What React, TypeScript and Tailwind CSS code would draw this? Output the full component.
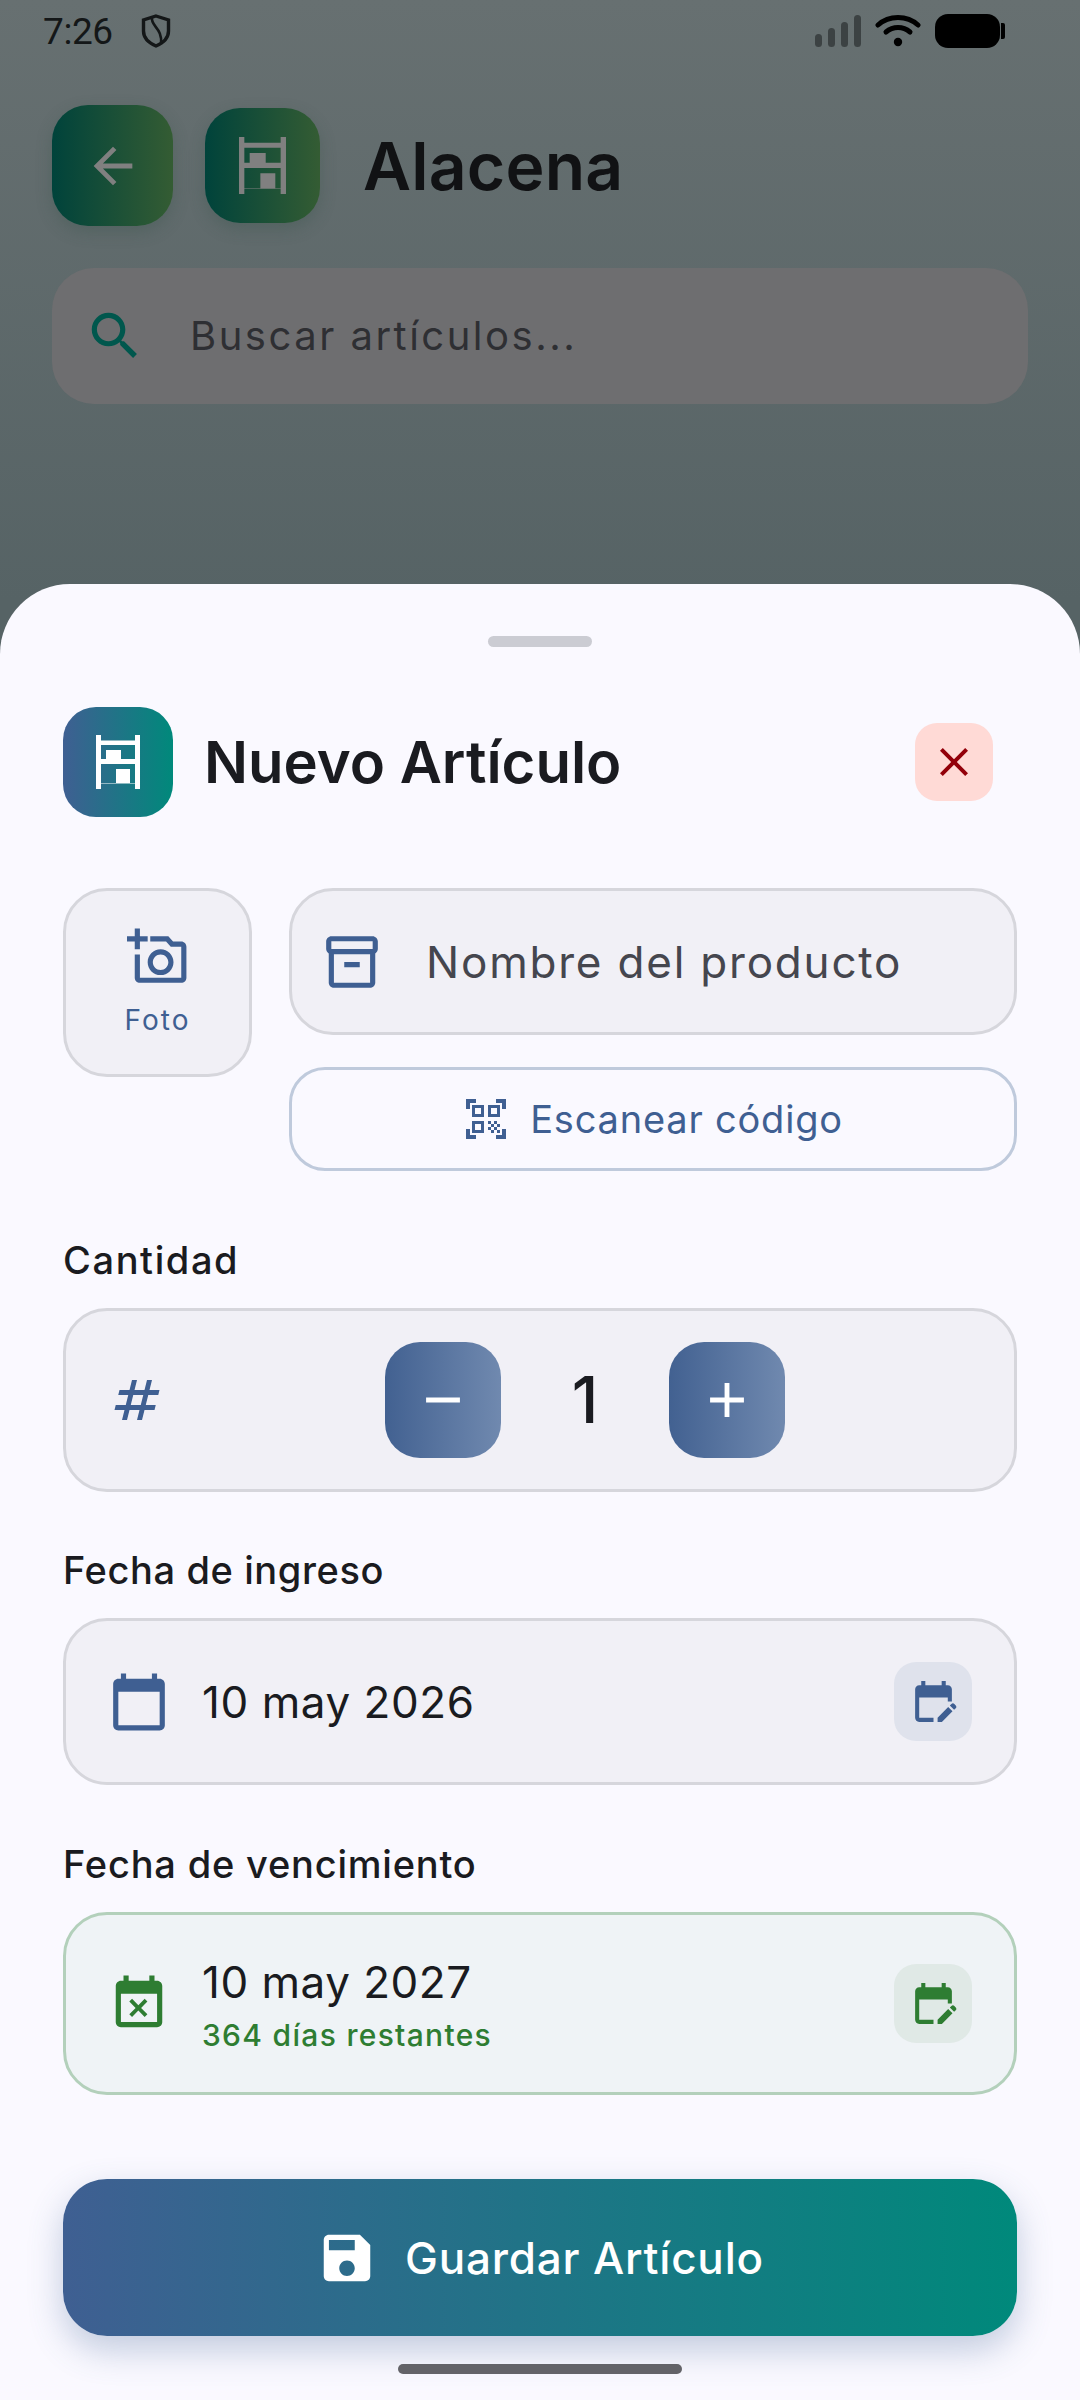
import React from "react";

function Ic({ d, size, className }: { d: string; size: number; className?: string }) {
  return (
    <svg viewBox="0 0 24 24" width={size} height={size} fill="currentColor" fillRule="evenodd" className={"shrink-0 " + (className ?? "")}>
      <path d={d} />
    </svg>
  );
}

const P = {
  back: "M20 11H7.83l5.59-5.59L12 4l-8 8 8 8 1.41-1.41L7.83 13H20v-2z",
  search: "M15.5 14h-.79l-.28-.27C15.41 12.59 16 11.11 16 9.5 16 5.91 13.09 3 9.5 3S3 5.91 3 9.5 5.91 16 9.5 16c1.61 0 3.09-.59 4.23-1.57l.27.28v.79l5 4.99L20.49 19l-4.99-5zm-6 0C7.01 14 5 11.99 5 9.5S7.01 5 9.5 5 14 7.01 14 9.5 11.99 14 9.5 14z",
  close: "M19 6.41L17.59 5 12 10.59 6.41 5 5 6.41 10.59 12 5 17.59 6.41 19 12 13.41 17.59 19 19 17.59 13.41 12z",
  camera: "M21 6h-3.17L16 4H9v2h6.12l1.83 2H21v12H5v-9H3v9c0 1.1.9 2 2 2h16c1.1 0 2-.9 2-2V8c0-1.1-.9-2-2-2zM8 14c0 2.76 2.24 5 5 5s5-2.24 5-5-2.24-5-5-5-5 2.24-5 5zm5-3c1.65 0 3 1.35 3 3s-1.35 3-3 3-3-1.35-3-3 1.35-3 3-3zM5 6h3V4H5V1H3v3H0v2h3v3h2z",
  box: "M20 2H4c-1 0-2 .9-2 2v3.01c0 .72.43 1.34 1 1.69V20c0 1.1 1.1 2 2 2h14c.9 0 2-.9 2-2V8.7c.57-.35 1-.97 1-1.69V4c0-1.1-1-2-2-2zm-1 18H5V9h14v11zm1-13H4V4h16v3zM9 12h6v2H9z",
  qr: "M9.5 6.5v3h-3v-3h3M11 5H5v6h6V5zm-1.5 9.5v3h-3v-3h3M11 13H5v6h6v-6zm6.5-6.5v3h-3v-3h3M19 5h-6v6h6V5zm-6 8h1.5v1.5H13V13zm1.5 1.5H16V16h-1.5v-1.5zM16 13h1.5v1.5H16V13zm-3 3h1.5v1.5H13V16zm1.5 1.5H16V19h-1.5v-1.5zM16 16h1.5v1.5H16V16zm1.5-1.5H19V16h-1.5v-1.5zm0 3H19V19h-1.5v-1.5zM22 7h-2V4h-3V2h5v5zm0 15v-5h-2v3h-3v2h5zM2 22h5v-2H4v-3H2v5zM2 2v5h2V4h3V2H2z",
  hash: "M20.5 10l.5-2h-4l1-4h-2l-1 4h-4l1-4h-2L9 8H5l-.5 2h4l-1 4h-4L3 16h4l-1 4h2l1-4h4l-1 4h2l1-4h4l.5-2h-4l1-4h4zm-7 4h-4l1-4h4l-1 4z",
  minus: "M19 13H5v-2h14v2z",
  plus: "M19 13h-6v6h-2v-6H5v-2h6V5h2v6h6v2z",
  cal: "M20 3h-1V1h-2v2H7V1H5v2H4c-1.1 0-2 .9-2 2v16c0 1.1.9 2 2 2h16c1.1 0 2-.9 2-2V5c0-1.1-.9-2-2-2zm0 18H4V8h16v13z",
  busy: "M9.31 17l2.44-2.44L14.19 17l1.06-1.06-2.44-2.44 2.44-2.44L14.19 10l-2.44 2.44L9.31 10l-1.06 1.06 2.44 2.44-2.44 2.44L9.31 17zM19 3h-1V1h-2v2H8V1H6v2H5c-1.11 0-1.99.9-1.99 2L3 19c0 1.1.89 2 2 2h14c1.1 0 2-.9 2-2V5c0-1.1-.9-2-2-2zm0 16H5V8h14v11z",
  editCal: "M5 10h14v2h2V6c0-1.1-.9-2-2-2h-1V2h-2v2H8V2H6v2H5c-1.11 0-1.99.9-1.99 2L3 20c0 1.1.89 2 2 2h7v-2H5V10zM14 22v-2.1l5.2-5.2 2.1 2.1L16.1 22zM20 14l.8-.8c.4-.4 1-.4 1.4 0l.7.7c.4.4.4 1 0 1.4l-.8.8z",
  save: "M17 3H5c-1.11 0-2 .9-2 2v14c0 1.1.89 2 2 2h14c1.1 0 2-.9 2-2V7l-4-4zm-5 16c-1.66 0-3-1.34-3-3s1.34-3 3-3 3 1.34 3 3-1.34 3-3 3zm3-10H5V5h10v4z",
};

function Shelves({ w, className }: { w: number; className?: string }) {
  return (
    <svg viewBox="0 0 44 54" width={w} height={(w * 54) / 44} fill="currentColor" fillRule="evenodd" className={className}>
      <path d="M0 0h5v5.5h34V0h5v54h-5v-5.5H5V54H0zM5 10v14h5v-9h15v9h14V10zM5 29v19h15V34h14v14h5V29z" />
    </svg>
  );
}

function StatusBar() {
  return (
    <div className="flex h-[60px] items-center justify-between pl-[43px] pr-[75px] pt-[2px] text-[#141718]">
      <div className="flex items-center gap-[28px]">
        <span className="font-['Roboto',sans-serif] text-[37px] leading-none tracking-[-0.4px]">7:26</span>
        <svg viewBox="0 0 30 34" width="30" height="34" fill="none" stroke="currentColor" strokeWidth="3.4">
          <path d="M15 2 L27.5 6 V17 C27.5 24 22 29 15 32 C8 29 2.5 24 2.5 17 V6 Z" />
          <path d="M11 3 C9 12 22 14 20 30" strokeWidth="2.6" />
        </svg>
      </div>
      <div className="flex items-center gap-[14px]">
        <svg viewBox="0 0 46 32" width="46" height="32" fill="#3c4243">
          <rect x="0" y="19" width="7" height="13" rx="3.5" />
          <rect x="13" y="13" width="7" height="19" rx="3.5" />
          <rect x="26" y="7" width="7" height="25" rx="3.5" />
          <rect x="39" y="0" width="7" height="32" rx="3.5" />
        </svg>
        <svg viewBox="0 0 46 32" width="46" height="32" fill="none" stroke="#000" strokeWidth="5" strokeLinecap="round">
          <path d="M3 10 C14 0 32 0 43 10" />
          <path d="M11 17 C18 11 28 11 35 17" />
          <circle cx="23" cy="27" r="4.2" fill="#000" stroke="none" />
        </svg>
        <div className="flex items-center">
          <div className="h-[34px] w-[65px] rounded-[13px] bg-black" />
          <div className="ml-[1px] h-[16px] w-[4px] rounded-r-[2px] bg-black" />
        </div>
      </div>
    </div>
  );
}

function Label({ children, className }: { children: React.ReactNode; className: string }) {
  return <div className={"h-[46px] text-[38px] font-medium leading-[46px] text-[#1a1b20] " + className}>{children}</div>;
}

function EditBtn({ className, color }: { className: string; color: string }) {
  return (
    <div className={"flex h-[79px] w-[78px] shrink-0 items-center justify-center rounded-[22px] " + className}>
      <Ic d={P.editCal} size={49} className={color} />
    </div>
  );
}

function QtyBtn({ d }: { d: string }) {
  return (
    <div className="flex h-[116px] w-[116px] items-center justify-center rounded-[35px] bg-[linear-gradient(90deg,#426191,#7089af)] text-white">
      <Ic d={d} size={58} />
    </div>
  );
}

export default function App() {
  return (
    <div className="relative h-[2400px] w-[1080px] overflow-hidden bg-[linear-gradient(180deg,#677071_0px,#566365_600px)] font-['Inter',sans-serif]">
      <StatusBar />

      <div className="mt-[45px] flex items-center pl-[52px]">
        <div className="flex h-[121px] w-[121px] items-center justify-center rounded-[36px] bg-[linear-gradient(90deg,#00433b,#345c33)] text-[#808080] shadow-[0_6px_16px_rgba(50,80,70,0.3)]">
          <Ic d={P.back} size={58} />
        </div>
        <div className="ml-[32px] flex h-[115px] w-[115px] items-center justify-center rounded-[35px] bg-[linear-gradient(90deg,#00433b,#345c33)] text-[#808080] shadow-[0_6px_16px_rgba(50,80,70,0.3)]">
          <Shelves w={47} />
        </div>
        <div className="ml-[43px] text-[66px] font-semibold leading-none tracking-[0.2px] text-[#111214]">Alacena</div>
      </div>

      <div className="mx-[52px] mt-[42px] flex h-[136px] items-center rounded-[42px] bg-[#6e6e70] pl-[32px]">
        <Ic d={P.search} size={62} className="text-[#00574d]" />
        <span className="ml-[44px] text-[40px] tracking-[2.5px] text-[#2e2f33]">Buscar artículos...</span>
      </div>

      <div className="absolute inset-x-0 bottom-0 top-[584px] flex flex-col rounded-t-[70px] bg-[#faf9ff] px-[63px] pt-[52px]">
        <div className="mx-auto h-[11px] w-[104px] rounded-full bg-[#cbccd3]" />

        <div className="mt-[60px] flex h-[110px] items-center">
          <div className="flex h-[110px] w-[110px] items-center justify-center rounded-[33px] bg-[linear-gradient(90deg,#3f5f92,#00897b)] text-white">
            <Shelves w={44} />
          </div>
          <div className="ml-[31px] flex-1 text-[58px] font-semibold leading-none tracking-[0px] text-[#1a1b20]">Nuevo Artículo</div>
          <div className="mr-[24px] flex h-[78px] w-[78px] items-center justify-center rounded-[22px] bg-[#ffdad6] text-[#93000a]">
            <Ic d={P.close} size={48} />
          </div>
        </div>

        <div className="mt-[71px] flex items-start gap-[37px]">
          <div className="flex h-[189px] w-[189px] shrink-0 flex-col items-center rounded-[44px] border-[3px] border-[#d6d6dc] bg-[#f1f0f6] pt-[35px] text-[#3f5f92]">
            <Ic d={P.camera} size={62} className="ml-[1px]" />
            <span className="mt-[16px] text-[28px] leading-[32px] tracking-[2px]">Foto</span>
          </div>
          <div className="flex flex-1 flex-col gap-[32px]">
            <div className="flex h-[147px] items-center rounded-[44px] border-[3px] border-[#d6d6dc] bg-[#f1f0f6] pl-[29px]">
              <Ic d={P.box} size={62} className="text-[#3f5f92]" />
              <span className="ml-[43px] text-[44px] tracking-[1.8px] text-[#45464e]">Nombre del producto</span>
            </div>
            <div className="flex h-[104px] items-center justify-center gap-[20px] rounded-[36px] border-[3px] border-[#bfcadc] pr-[1px] text-[#3f5f92]">
              <Ic d={P.qr} size={48} />
              <span className="text-[38px] tracking-[0.8px]">Escanear código</span>
            </div>
          </div>
        </div>

        <Label className="mt-[66px] tracking-[1.6px]">Cantidad</Label>
        <div className="mt-[25px] flex h-[184px] items-center rounded-[44px] border-[3px] border-[#d6d6dc] bg-[#f1f0f6] pl-[41px]">
          <Ic d={P.hash} size={60} className="text-[#3f5f92]" />
          <div className="ml-[218px]"><QtyBtn d={P.minus} /></div>
          <div className="w-[168px] text-center text-[64px] font-medium leading-none text-[#1a1b20]">1</div>
          <QtyBtn d={P.plus} />
        </div>

        <Label className="mt-[55px] tracking-[0.6px]">Fecha de ingreso</Label>
        <div className="mt-[25px] flex h-[167px] items-center rounded-[44px] border-[3px] border-[#d6d6dc] bg-[#f1f0f6] pl-[42px] pr-[42px]">
          <Ic d={P.cal} size={62} className="text-[#3f5f92]" />
          <span className="ml-[32px] flex-1 text-[44px] tracking-[0.55px] text-[#1a1b20]">10 may 2026</span>
          <EditBtn className="bg-[#dfe2ec]" color="text-[#3f5f92]" />
        </div>

        <Label className="mt-[56px] tracking-[0.8px]">Fecha de vencimiento</Label>
        <div className="mt-[25px] flex h-[183px] items-center rounded-[44px] border-[3px] border-[#b3d0bb] bg-[#eff3f6] pl-[42px] pr-[42px]">
          <Ic d={P.busy} size={62} className="text-[#2e7d32]" />
          <div className="ml-[32px] flex flex-1 flex-col">
            <span className="text-[44px] leading-[54px] tracking-[0.5px] text-[#1a1b20]">10 may 2027</span>
            <span className="mt-[8px] text-[30px] font-medium leading-[36px] tracking-[1.3px] text-[#2e7d32]">364 días restantes</span>
          </div>
          <EditBtn className="bg-[#e0e9e6]" color="text-[#2e7d32]" />
        </div>

        <div className="mt-[84px] flex h-[157px] items-center justify-center gap-[27px] rounded-[44px] bg-[linear-gradient(90deg,#3f5f92,#00897b)] text-white shadow-[0_14px_34px_rgba(63,95,146,0.3)]">
          <Ic d={P.save} size={62} />
          <span className="text-[44px] font-medium tracking-[0.8px]">Guardar Artículo</span>
        </div>
      </div>

      <div className="absolute bottom-[26px] left-[398px] h-[10px] w-[284px] rounded-full bg-[#636368]" />
    </div>
  );
}
